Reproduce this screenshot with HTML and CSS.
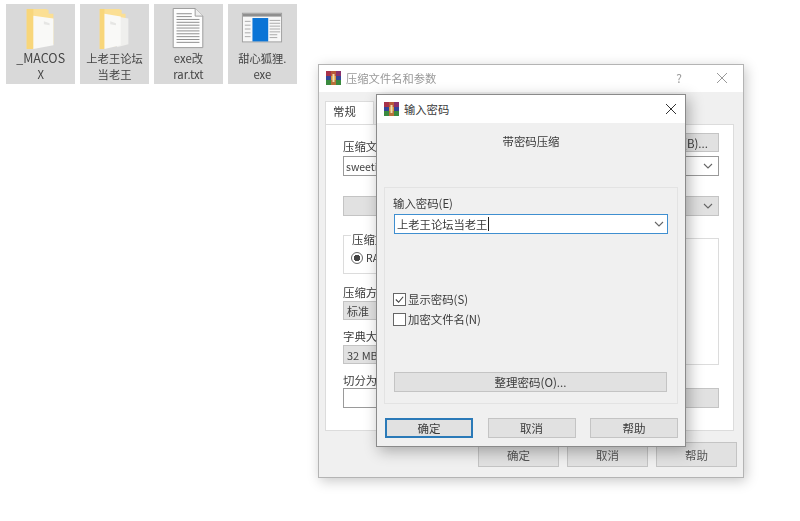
FILE: index.html
```html
<!DOCTYPE html>
<html lang="zh-CN">
<head>
    <meta charset="UTF-8">
    <meta name="viewport" content="width=device-width, initial-scale=1.0">
    <title>压缩文件名和参数</title>
    <link rel="stylesheet" href="styles.css">
</head>
<body>
<svg class="defs" width="0" height="0">
    <symbol id="rar" viewBox="0 0 15 14">
        <rect x="0" y="0" width="5" height="5" fill="#a8324a"/>
        <rect x="5" y="0" width="5" height="5" fill="#b8583a"/>
        <rect x="10" y="0" width="5" height="5" fill="#8a2f6c"/>
        <rect x="0" y="5" width="5" height="4" fill="#34459a"/>
        <rect x="5" y="5" width="5" height="4" fill="#d9953a"/>
        <rect x="10" y="5" width="5" height="4" fill="#34459a"/>
        <rect x="0" y="9" width="5" height="5" fill="#3a8a3f"/>
        <rect x="5" y="9" width="5" height="5" fill="#b8703a"/>
        <rect x="10" y="9" width="5" height="5" fill="#3a8a3f"/>
        <rect x="6.500" y="3" width="2" height="8" fill="#efdcae"/>
    </symbol>
    <symbol id="chev" viewBox="0 0 10 6">
        <path d="M1 1l4 4 4-4" fill="none" stroke="#666" stroke-width="1.100"/>
    </symbol>
</svg>

<!-- desktop files -->
<div class="files">
    <div class="file">
        <svg class="file-icon" viewBox="0 0 44 44">
            <path d="M7 1h20l3 1v4h5v32L7 43z" fill="#fbdf94"/>
            <path d="M7 1h7v42H7z" fill="#f8d67a"/>
            <path d="M14 8l21 3v28l-21 4z" fill="#f9f9f7"/>
            <path d="M25 14l6 2v2l-6-1z" fill="#e6e6e4"/>
        </svg>
        <span><span class="caps">_MACOS</span><br>X</span>
    </div>
    <div class="file">
        <svg class="file-icon" viewBox="0 0 44 44">
            <path d="M6 1h20l3 1v4h4v32L6 43z" fill="#fbdf94"/>
            <path d="M6 1h5v42H6z" fill="#f8d67a"/>
            <path d="M24 9l12 2v27l-12 3z" fill="#efefed"/>
            <path d="M11 6l17 3v30l-17 4z" fill="#f9f9f7"/>
            <path d="M17 14l6 2v2l-6-1z" fill="#e6e6e4"/>
        </svg>
        <span>上老王论坛<br>当老王</span>
    </div>
    <div class="file">
        <svg class="file-icon" viewBox="0 0 44 44">
            <path d="M6.500 0.500h23l8 8v33h-31z" fill="#fdfdfd" stroke="#9a9a9a"/>
            <path d="M29.500 0.500v8h8" fill="#eee" stroke="#9a9a9a"/>
            <path d="M10 6h16M10 9h16M10 12h24M10 15h24M10 18h24M10 21h24M10 24h24M10 27h24M10 30h24M10 33h24M10 36h24" stroke="#8c8c8c"/>
        </svg>
        <span>exe改<br>rar.txt</span>
    </div>
    <div class="file">
        <svg class="file-icon" viewBox="0 0 44 44">
            <rect x="1.500" y="5.500" width="41" height="30" fill="#f7f7f7" stroke="#a0a0a0"/>
            <rect x="2" y="6" width="40" height="3" fill="#8f8f8f"/>
            <rect x="12" y="10.500" width="16.500" height="24.500" fill="#0a74d6"/>
            <path d="M4 14h6M4 18h6M4 22h6M4 26h6M4 30h6M30 13h11M30 16h11M30 19h11M30 22h11M30 25h11M30 28h8M30 31h8" stroke="#a8a8a8"/>
        </svg>
        <span>甜心狐狸.<br>exe</span>
    </div>
</div>

<!-- window behind -->
<div class="window window-back">
    <div class="titlebar titlebar-back">
        <svg class="app-icon"><use href="#rar"/></svg>
        <span class="title title-muted">压缩文件名和参数</span>
        <span class="help-mark">?</span>
        <svg class="close close-muted" viewBox="0 0 10 10"><path d="M0 0l10 10M10 0L0 10"/></svg>
    </div>
    <div class="back-body">
        <div class="tab">常规</div>
        <div class="panel">
            <div class="browse-row"><button class="btn browse">浏览(B)...</button></div>
            <div class="label label-name">压缩文件名(A)</div>
            <div class="field field-name">sweetie.rar<svg class="chev"><use href="#chev"/></svg></div>
            <div class="field field-grey field-update"><svg class="chev"><use href="#chev"/></svg></div>
            <div class="options">
                <div class="options-left">
                    <div class="format-box">
                        <span class="format-legend">压缩文件格式</span>
                        <div class="radio-row"><span class="radio"></span>RAR</div>
                    </div>
                    <div class="label label-method">压缩方式(C)</div>
                    <div class="field field-grey small">标准</div>
                    <div class="label label-dict">字典大小(I)</div>
                    <div class="field field-grey small">32 MB</div>
                    <div class="label label-split">切分为分卷</div>
                    <div class="field"></div>
                </div>
                <div class="options-right">
                    <div class="option-list"></div>
                    <button class="btn set-btn"></button>
                </div>
            </div>
        </div>
        <div class="back-actions">
            <button class="btn back-btn">确定</button>
            <button class="btn back-btn">取消</button>
            <button class="btn back-btn">帮助</button>
        </div>
    </div>
</div>

<!-- password dialog -->
<div class="window window-front">
    <div class="titlebar titlebar-front">
        <svg class="app-icon"><use href="#rar"/></svg>
        <span class="title">输入密码</span>
        <svg class="close" viewBox="0 0 10 10"><path d="M0 0l10 10M10 0L0 10"/></svg>
    </div>
    <div class="front-body">
        <div class="heading">带密码压缩</div>
        <div class="group">
            <div class="pw-label">输入密码(E)</div>
            <div class="pw-input">上老王论坛当老王<span class="caret"></span><svg class="chev"><use href="#chev"/></svg></div>
            <label class="check check-first"><span class="box"><svg viewBox="0 0 12 12"><path d="M2 6l3 3 5-6" fill="none" stroke="#444" stroke-width="1.200"/></svg></span>显示密码(S)</label>
            <label class="check"><span class="box"></span>加密文件名(N)</label>
            <button class="btn organize">整理密码(O)...</button>
        </div>
        <div class="front-actions">
            <button class="btn front-btn primary">确定</button>
            <button class="btn front-btn">取消</button>
            <button class="btn front-btn">帮助</button>
        </div>
    </div>
</div>
</body>
</html>
```

FILE: styles.css
```css
* {
    margin: 0;
    padding: 0;
    box-sizing: border-box;
}

html, body {
    height: 100%;
}

body {
    position: relative;
    overflow: hidden;
    background-color: #fff;
    color: #3a3a3a;
    font-family: "Noto Sans CJK SC", "Liberation Sans", sans-serif;
    font-size: 11.400px;
}

.defs {
    position: absolute;
}

/* desktop files */
.files {
    display: flex;
    gap: 4.600px;
    padding: 4px 0 0 6px;
    filter: blur(0.35px);
}

.file {
    display: flex;
    flex-direction: column;
    align-items: center;
    width: 69.300px;
    height: 80px;
    padding-top: 4px;
    background-color: #d9d9d9;
    text-align: center;
    line-height: 16px;
    color: #444;
    font-size: 11.300px;
}

.caps {
    font-size: 12.500px;
}

.file-icon {
    width: 42px;
    height: 42px;
    flex-shrink: 0;
}

/* windows */
.window {
    position: absolute;
    background-color: #f0f0f0;
    filter: blur(0.3px);
}

.window-back {
    left: 318px;
    top: 64px;
    width: 426px;
    height: 414px;
    border: 1px solid #b4b4b4;
    box-shadow: 2px 3px 12px rgba(0, 0, 0, 0.22);
}

.window-front {
    left: 376px;
    top: 94px;
    width: 310px;
    height: 353px;
    border: 1px solid #8a8a8a;
    box-shadow: 3px 4px 14px rgba(0, 0, 0, 0.3);
}

.titlebar {
    display: flex;
    align-items: center;
    height: 27px;
    padding-left: 7px;
    background-color: #fff;
}

.titlebar-back {
    padding-bottom: 2px;
}

.titlebar-front {
    height: 28px;
    padding-bottom: 1px;
}

.app-icon {
    width: 15px;
    height: 14px;
    margin-right: 5px;
    flex-shrink: 0;
}

.title {
    flex: 1;
    font-size: 11.300px;
}

.title-muted {
    color: #999;
}

.help-mark {
    margin-right: 35px;
    color: #999;
    font-size: 12px;
}

.close {
    width: 10px;
    height: 10px;
    margin-right: 9px;
    stroke: #333;
    stroke-width: 1;
}

.close-muted {
    stroke: #999;
    margin-right: 16px;
}

/* back window content */
.back-body {
    padding: 9px 9px 0 6px;
}

.tab {
    width: 49px;
    height: 24px;
    padding: 1px 0 0 7px;
    background-color: #fff;
    border: 1px solid #dcdcdc;
    border-bottom: none;
}

.panel {
    height: 307px;
    margin-top: -1px;
    padding: 8px 14px 0 17px;
    background-color: #fff;
    border: 1px solid #dcdcdc;
}

.browse-row {
    display: flex;
    justify-content: flex-end;
}

.browse {
    width: 70px;
    height: 19px;
}

.label {
    line-height: 14px;
}

.label-name {
    margin-top: -13px;
}

.field {
    display: flex;
    align-items: center;
    justify-content: space-between;
    height: 20px;
    padding: 0 3px 0 2px;
    border: 1px solid #9a9a9a;
    background-color: #fff;
    color: #444;
    font-size: 10.500px;
}

.field-name {
    margin-top: 3px;
}

.field-grey {
    background-color: #e1e1e1;
    border-color: #c4c4c4;
}

.field-update {
    margin-top: 20px;
    justify-content: flex-end;
}

.chev {
    width: 10px;
    height: 6px;
    flex-shrink: 0;
    margin-right: 2px;
}

.options {
    display: flex;
    justify-content: space-between;
    margin-top: 19px;
}

.options-left {
    width: 100px;
}

.small {
    height: 19px;
    padding-left: 3px;
    font-size: 11px;
}

.format-box {
    position: relative;
    width: 100px;
    height: 39px;
    border: 1px solid #dcdcdc;
}

.format-legend {
    position: absolute;
    left: 7px;
    top: -4px;
    padding: 0 1px;
    background-color: #fff;
    line-height: 14px;
}

.radio-row {
    display: flex;
    align-items: center;
    gap: 3px;
    padding: 14px 0 0 7px;
    font-size: 10.500px;
}

.radio {
    width: 12px;
    height: 12px;
    border: 1px solid #666;
    border-radius: 50%;
    background: radial-gradient(circle, #444 0 3px, #fff 3.500px);
}

.label-method {
    margin-top: 11px;
    margin-bottom: 2px;
}

.label-dict {
    margin-top: 9px;
    margin-bottom: 2px;
}

.label-split {
    margin-top: 9px;
    margin-bottom: 1px;
}

.options-right {
    width: 40px;
    padding-top: 3px;
}

.option-list {
    height: 127px;
    border: 1px solid #dcdcdc;
}

.set-btn {
    display: block;
    width: 100%;
    height: 20px;
    margin-top: 23px;
}

.back-actions {
    display: flex;
    justify-content: flex-end;
    gap: 8px;
    margin: 11px -3px 0 0;
}

.back-btn {
    width: 81px;
    height: 25px;
    background-color: #e3e3e3;
    border-color: #d2d2d2;
    color: #555;
}

/* buttons */
.btn {
    background-color: #e1e1e1;
    border: 1px solid #c4c4c4;
    font-family: inherit;
    font-size: 11.500px;
}

.btn:not(.back-btn) {
    color: #3a3a3a;
}

/* password dialog */
.front-body {
    padding: 0 7px;
}

.heading {
    padding-top: 10px;
    height: 64px;
    text-align: center;
    line-height: 17px;
}

.group {
    display: flex;
    flex-direction: column;
    height: 217px;
    padding: 8px 10px 0 9px;
    border: 1px solid #e3e3e3;
}

.pw-label {
    margin-left: -1px;
    line-height: 14px;
}

.pw-input {
    display: flex;
    align-items: center;
    height: 20px;
    margin: 4px -1px 0 0;
    padding-left: 2px;
    background-color: #fff;
    border: 1px solid #3f8fd0;
    font-size: 11.300px;
}

.caret {
    width: 1px;
    height: 14px;
    margin-left: 1px;
    background-color: #222;
}

.pw-input .chev {
    margin-left: auto;
    margin-right: 3px;
}

.check {
    display: flex;
    align-items: center;
    gap: 2px;
    height: 20px;
    margin-left: -1px;
}

.check-first {
    margin-top: 55px;
}

.box {
    width: 13px;
    height: 13px;
    background-color: #fff;
    border: 1px solid #666;
    flex-shrink: 0;
}

.box svg {
    display: block;
    width: 11px;
    height: 11px;
}

.organize {
    height: 20px;
    margin-top: 43px;
}

.front-actions {
    display: flex;
    justify-content: space-between;
    margin-top: 14px;
    padding: 0 0 0 1px;
}

.front-btn {
    width: 88px;
    height: 20px;
}

.primary {
    border: 2px solid #2b7ab8;
}
```
